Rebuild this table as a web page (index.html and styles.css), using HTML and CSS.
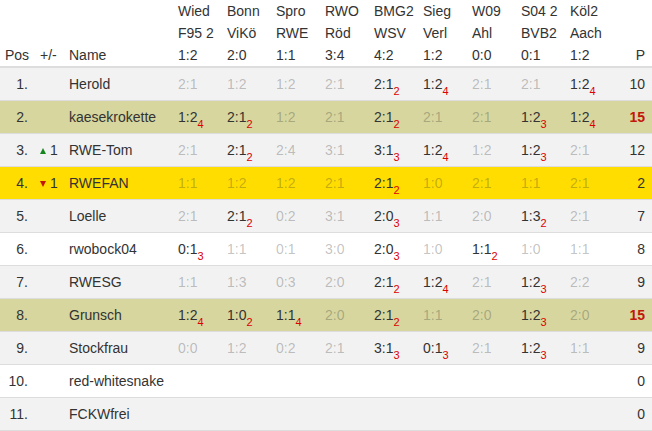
FILE: index.html
```html
<!DOCTYPE html>
<html lang="de">
<head>
<meta charset="utf-8">
<title>Tabelle</title>
<link rel="stylesheet" href="styles.css">
</head>
<body>
<table class="tbl">
  <colgroup>
    <col class="c-pos"><col class="c-diff"><col class="c-name">
    <col class="c-m"><col class="c-m"><col class="c-m"><col class="c-m"><col class="c-m"><col class="c-m"><col class="c-m"><col class="c-m"><col class="c-m">
    <col class="c-p">
  </colgroup>
  <thead>
    <tr>
      <th class="pos-h">Pos</th>
      <th>+/-</th>
      <th>Name</th>
      <th>Wied<br>F95 2<br>1:2</th>
      <th>Bonn<br>ViKö<br>2:0</th>
      <th>Spro<br>RWE<br>1:1</th>
      <th>RWO<br>Röd<br>3:4</th>
      <th>BMG2<br>WSV<br>4:2</th>
      <th>Sieg<br>Verl<br>1:2</th>
      <th>W09<br>Ahl<br>0:0</th>
      <th>S04 2<br>BVB2<br>0:1</th>
      <th>Köl2<br>Aach<br>1:2</th>
      <th class="p">P</th>
    </tr>
  </thead>
  <tbody>
    <tr>
      <td class="pos">1.</td><td></td><td>Herold</td>
      <td class="g">2:1</td><td class="g">1:2</td><td class="g">1:2</td><td class="g">2:1</td>
      <td>2:1<span class="s">2</span></td><td>1:2<span class="s">4</span></td>
      <td class="g">2:1</td><td class="g">2:1</td><td>1:2<span class="s">4</span></td>
      <td class="p">10</td>
    </tr>
    <tr class="hl-olive">
      <td class="pos">2.</td><td></td><td>kaesekrokette</td>
      <td>1:2<span class="s">4</span></td><td>2:1<span class="s">2</span></td><td class="g">1:2</td><td class="g">2:1</td>
      <td>2:1<span class="s">2</span></td><td class="g">2:1</td><td class="g">2:1</td>
      <td>1:2<span class="s">3</span></td><td>1:2<span class="s">4</span></td>
      <td class="p win">15</td>
    </tr>
    <tr>
      <td class="pos">3.</td><td><span class="up"></span>1</td><td>RWE-Tom</td>
      <td class="g">2:1</td><td>2:1<span class="s">2</span></td><td class="g">2:4</td><td class="g">3:1</td>
      <td>3:1<span class="s">3</span></td><td>1:2<span class="s">4</span></td><td class="g">1:2</td>
      <td>1:2<span class="s">3</span></td><td class="g">2:1</td>
      <td class="p">12</td>
    </tr>
    <tr class="hl-yellow">
      <td class="pos">4.</td><td><span class="down"></span>1</td><td>RWEFAN</td>
      <td class="g">1:1</td><td class="g">1:2</td><td class="g">1:2</td><td class="g">2:1</td>
      <td>2:1<span class="s">2</span></td><td class="g">1:0</td><td class="g">2:1</td>
      <td class="g">1:1</td><td class="g">2:1</td>
      <td class="p">2</td>
    </tr>
    <tr>
      <td class="pos">5.</td><td></td><td>Loelle</td>
      <td class="g">2:1</td><td>2:1<span class="s">2</span></td><td class="g">0:2</td><td class="g">3:1</td>
      <td>2:0<span class="s">3</span></td><td class="g">1:1</td><td class="g">2:0</td>
      <td>1:3<span class="s">2</span></td><td class="g">2:1</td>
      <td class="p">7</td>
    </tr>
    <tr>
      <td class="pos">6.</td><td></td><td>rwobock04</td>
      <td>0:1<span class="s">3</span></td><td class="g">1:1</td><td class="g">0:1</td><td class="g">3:0</td>
      <td>2:0<span class="s">3</span></td><td class="g">1:0</td><td>1:1<span class="s">2</span></td>
      <td class="g">1:0</td><td class="g">1:1</td>
      <td class="p">8</td>
    </tr>
    <tr>
      <td class="pos">7.</td><td></td><td>RWESG</td>
      <td class="g">1:1</td><td class="g">1:3</td><td class="g">0:3</td><td class="g">2:0</td>
      <td>2:1<span class="s">2</span></td><td>1:2<span class="s">4</span></td><td class="g">2:1</td>
      <td>1:2<span class="s">3</span></td><td class="g">2:2</td>
      <td class="p">9</td>
    </tr>
    <tr class="hl-olive">
      <td class="pos">8.</td><td></td><td>Grunsch</td>
      <td>1:2<span class="s">4</span></td><td>1:0<span class="s">2</span></td><td>1:1<span class="s">4</span></td><td class="g">2:0</td>
      <td>2:1<span class="s">2</span></td><td class="g">1:1</td><td class="g">2:0</td>
      <td>1:2<span class="s">3</span></td><td class="g">2:0</td>
      <td class="p win">15</td>
    </tr>
    <tr>
      <td class="pos">9.</td><td></td><td>Stockfrau</td>
      <td class="g">0:0</td><td class="g">1:2</td><td class="g">0:2</td><td class="g">2:1</td>
      <td>3:1<span class="s">3</span></td><td>0:1<span class="s">3</span></td><td class="g">2:1</td>
      <td>1:2<span class="s">3</span></td><td class="g">1:1</td>
      <td class="p">9</td>
    </tr>
    <tr>
      <td class="pos">10.</td><td></td><td>red-whitesnake</td>
      <td></td><td></td><td></td><td></td><td></td><td></td><td></td><td></td><td></td>
      <td class="p">0</td>
    </tr>
    <tr>
      <td class="pos">11.</td><td></td><td>FCKWfrei</td>
      <td></td><td></td><td></td><td></td><td></td><td></td><td></td><td></td><td></td>
      <td class="p">0</td>
    </tr>
  </tbody>
</table>
</body>
</html>
```

FILE: styles.css
```css
html, body {
  margin: 0;
  padding: 0;
  background: #fff;
}

body {
  font-family: "Liberation Sans", Arial, sans-serif;
  font-size: 14px;
  color: #333;
}

.tbl {
  width: 652px;
  table-layout: fixed;
  border-collapse: collapse;
  border-spacing: 0;
}

.c-pos { width: 35px; }
.c-diff { width: 29px; }
.c-name { width: 109px; }
.c-m { width: 49px; }
.c-p { width: 38px; }

.tbl th {
  font-weight: normal;
  text-align: left;
  vertical-align: bottom;
  padding: 0 5px;
  line-height: 22px;
  border-bottom: 2px solid #ddd;
  white-space: nowrap;
}

.tbl td {
  padding: 6px 5px;
  line-height: 20px;
  border-top: 1px solid #ddd;
  white-space: nowrap;
  vertical-align: top;
}

.tbl tbody tr:nth-child(odd) { background: #f2f2f2; }
.tbl tbody tr:nth-child(even) { background: #fff; }
.tbl tbody tr.hl-olive { background: #d6d69e; }
.tbl tbody tr.hl-yellow { background: #ffdd00; }

.tbl tbody tr:last-child td { border-bottom: 1px solid #ddd; }

.tbl td.pos {
  text-align: right;
  padding-right: 7px;
}

.tbl .p {
  text-align: right;
  padding-right: 7px;
}

.tbl td.win {
  color: #c3170b;
  font-weight: bold;
}

.tbl td.g {
  color: rgba(51, 51, 51, 0.3);
}

.s {
  font-size: 11px;
  color: #d00;
  vertical-align: -6px;
  line-height: 0;
}

.up, .down {
  display: inline-block;
  width: 0;
  height: 0;
  border-left: 3.5px solid transparent;
  border-right: 3.5px solid transparent;
  margin-right: 4px;
  vertical-align: 1px;
}

.up { border-bottom: 6px solid #14861d; }
.down { border-top: 6px solid #c2160a; }
```
